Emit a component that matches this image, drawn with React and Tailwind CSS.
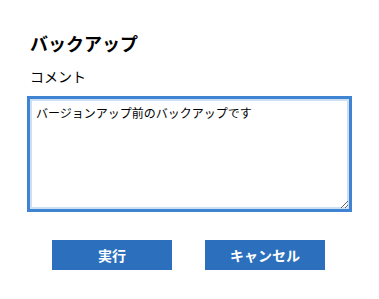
import React, { useEffect, useRef } from 'react'

const font = { fontFamily: '"Noto Sans CJK JP", "Noto Sans", sans-serif' }

export default function App() {
  const ref = useRef(null)

  useEffect(() => {
    const el = ref.current
    if (!el) return
    el.focus()
    el.setSelectionRange(el.value.length, el.value.length)
  }, [])

  return (
    <div className="w-[379px] h-[299px] bg-white pl-[27px] pt-[30px] text-black" style={font}>
      <h2 className="pl-[3px] text-[18px] font-bold leading-[26px]">バックアップ</h2>
      <div className="pl-[3px] mt-[10px] text-[14px] leading-[20px]">コメント</div>
      <textarea
        ref={ref}
        defaultValue="バージョンアップ前のバックアップです"
        className="mt-[10px] block w-[325px] h-[116px] border-[3px] border-[#3e84d2] shadow-[inset_0_0_0_2px_#cddff3] px-[6px] py-[5px] text-[12px] leading-[18px] outline-none caret-black"
        style={font}
      />
      <div className="mt-[28px] flex gap-[33px] pl-[25px]">
        <button className="w-[120px] h-[30px] bg-[#2c70bd] text-white text-[14px] font-bold">実行</button>
        <button className="w-[120px] h-[30px] bg-[#2c70bd] text-white text-[14px] font-bold">キャンセル</button>
      </div>
    </div>
  )
}
